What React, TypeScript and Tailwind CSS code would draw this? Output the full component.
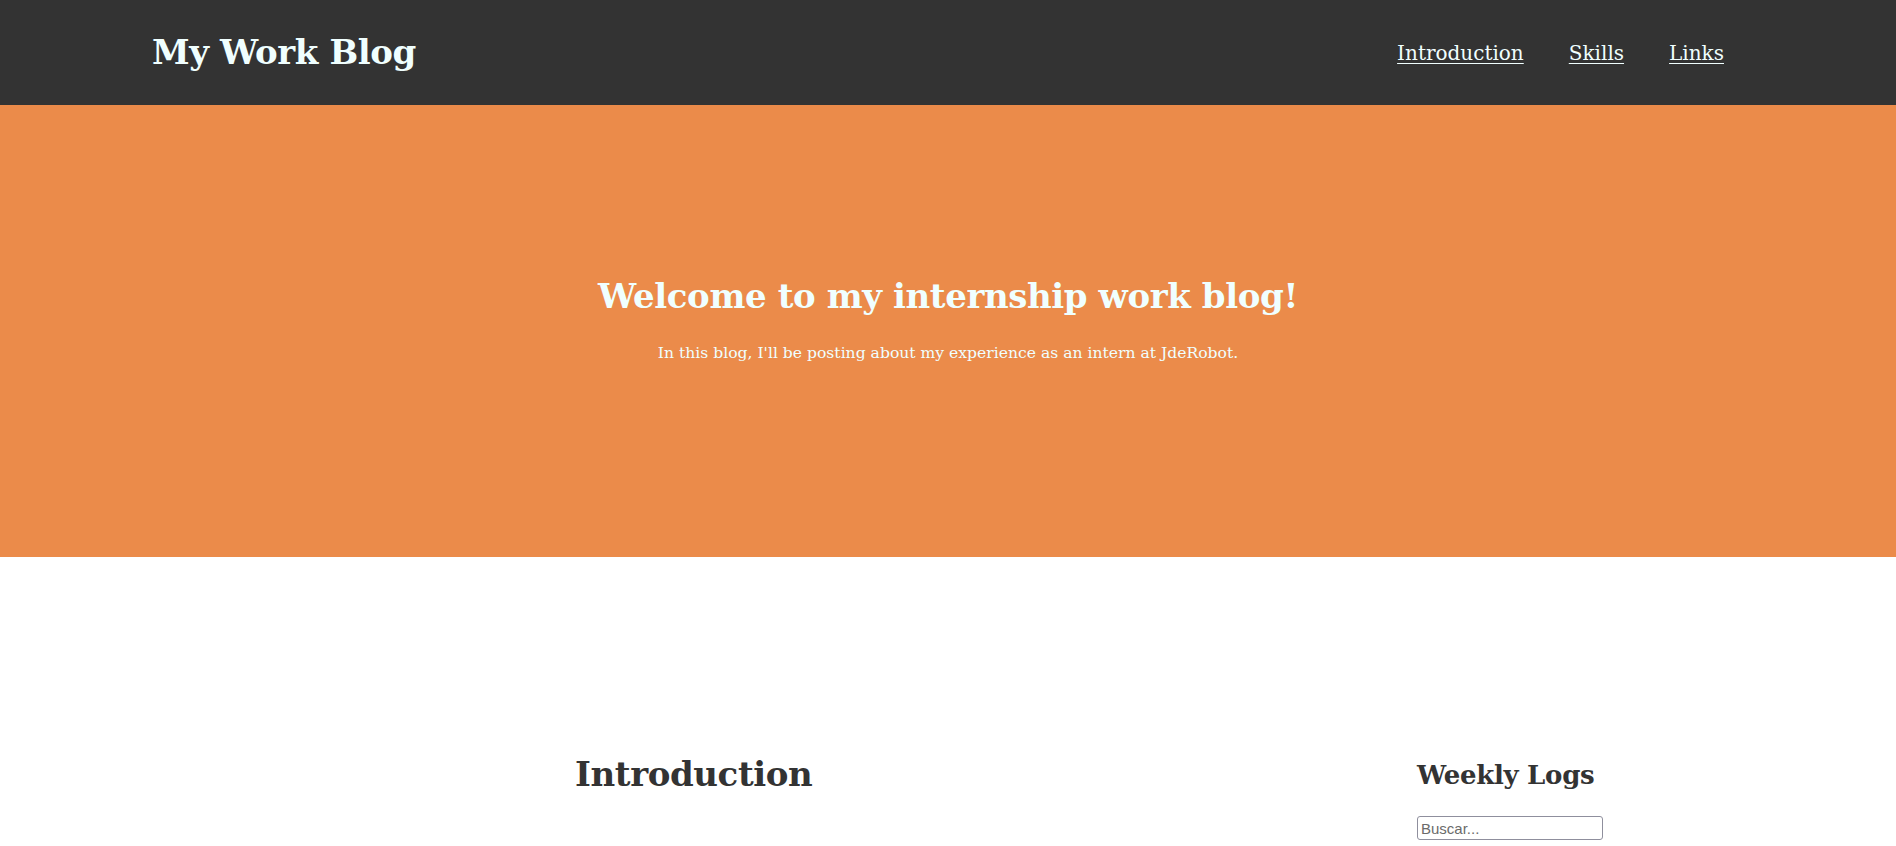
const serif = "font-['DejaVu_Serif',Georgia,serif]";

const NavLink = ({ label }: { label: string }) => (
  <a href="#" className="underline underline-offset-[3px] decoration-1 text-[#f0ffff]">
    {label}
  </a>
);

export default function App() {
  return (
    <div className={`min-h-screen bg-white ${serif}`}>
      <header className="h-[105px] bg-[#333333] flex items-center justify-between pl-[152px] pr-[172px]">
        <h1 className="text-[34px] font-bold text-[#f0ffff] tracking-[-0.4px]">My Work Blog</h1>
        <nav className="flex gap-[45px] text-[20px]">
          <NavLink label="Introduction" />
          <NavLink label="Skills" />
          <NavLink label="Links" />
        </nav>
      </header>

      <section className="h-[452px] bg-[#eb8b4a] flex flex-col items-center pt-[166px] text-[#f0ffff] text-center">
        <h2 className="text-[34px] font-bold tracking-[-0.4px]">Welcome to my internship work blog!</h2>
        <p className="text-[15.6px] mt-[20px]">In this blog, I'll be posting about my experience as an intern at JdeRobot.</p>
      </section>

      <div className="flex justify-between pl-[575px] pr-[293px] pt-[192px]">
        <main>
          <h2 className="text-[34px] font-bold text-[#333333] tracking-[-0.4px]">Introduction</h2>
        </main>
        <aside className="w-[186px] pt-[7px]">
          <h3 className="text-[26px] font-bold text-[#333333] tracking-[-0.3px]">Weekly Logs</h3>
          <input
            type="text"
            placeholder="Buscar..."
            className="mt-[21px] w-[186px] h-[24px] border border-[#8f8f9d] rounded-[3px] px-[3px] text-[15px] font-['Liberation_Sans',Arial,sans-serif] placeholder:text-[#6b6b6b]"
          />
        </aside>
      </div>
    </div>
  );
}
